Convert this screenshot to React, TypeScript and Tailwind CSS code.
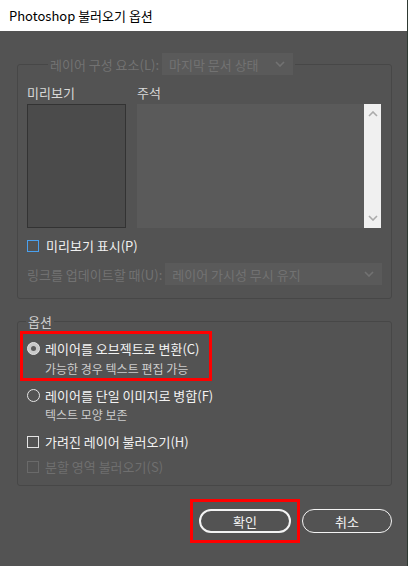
import React from "react";

const font = { fontFamily: '"Noto Sans CJK KR", "Noto Sans", sans-serif' };

function Chevron({ className, up }: { className?: string; up?: boolean }) {
  return (
    <svg width="10" height="6" viewBox="0 0 10 6" className={className}>
      <path
        d={up ? "M1 5 L5 1 L9 5" : "M1 1 L5 5 L9 1"}
        fill="none"
        stroke="currentColor"
        strokeWidth="1.6"
      />
    </svg>
  );
}

function Select({ label, className }: { label: string; className: string }) {
  return (
    <div className={`flex h-[22px] items-center justify-between bg-[#5a5a5a] pl-[7px] pr-[8px] text-[#727272] ${className}`}>
      <span>{label}</span>
      <Chevron className="text-[#727272]" />
    </div>
  );
}

function Radio({ checked }: { checked?: boolean }) {
  if (checked) {
    return (
      <span className="flex h-[13px] w-[13px] shrink-0 items-center justify-center rounded-full border border-[#e2e2e2] bg-[#c9c9c9]">
        <span className="h-[5px] w-[5px] rounded-full bg-[#5c5c5c]" />
      </span>
    );
  }
  return <span className="h-[13px] w-[13px] shrink-0 rounded-full border-[1.5px] border-[#e6e6e6]" />;
}

export default function App() {
  return (
    <div className="flex h-[566px] w-[408px] bg-[#535353] text-[13px] leading-[17px]" style={font}>
      <div className="flex w-[407px] flex-col">
        {/* title bar */}
        <div className="flex h-[31px] items-center bg-white pl-[9px] text-[13px] text-black">
          Photoshop 불러오기 옵션
        </div>

        {/* layer comps group */}
        <fieldset className="mx-[17px] mt-[22px] w-[375px] rounded-[3px] border border-[#474747] px-[9px] pb-[13px]">
          <legend className="ml-[21px] flex items-center gap-[3px] px-[2px] text-[#727272]">
            <span className="whitespace-nowrap">레이어 구성 요소(L):</span>
            <Select label="마지막 문서 상태" className="w-[131px] shrink-0" />
          </legend>

          <div className="mt-[9px] flex gap-[11px] text-[#d8d8d8]">
            <div className="flex w-[99px] flex-col">
              <span>미리보기</span>
              <div className="mt-[3px] h-[124px] border border-[#333333] bg-[#4b4b4b]" />
            </div>
            <div className="flex w-[244px] flex-col">
              <span>주석</span>
              <div className="mt-[3px] flex h-[124px] bg-[#5a5a5a]">
                <div className="flex-1" />
                <div className="flex w-[17px] flex-col items-center justify-between bg-[#f0f0f0] py-[7px] text-[#ababab]">
                  <Chevron up />
                  <Chevron />
                </div>
              </div>
            </div>
          </div>

          <label className="mt-[9px] flex items-center gap-[7px] text-[#f0f0f0]">
            <span className="h-[12px] w-[12px] border border-[#4aa0ee]" />
            <span>미리보기 표시(P)</span>
          </label>

          <div className="mt-[9px] flex items-center gap-[3px] text-[#727272]">
            <span className="whitespace-nowrap">링크를 업데이트할 때(U):</span>
            <Select label="레이어 가시성 무시 유지" className="w-[217px] shrink-0" />
          </div>
        </fieldset>

        {/* options group */}
        <fieldset className="mx-[17px] mt-[14px] h-[173px] w-[375px] rounded-[3px] border border-[#474747] pl-[2px]">
          <legend className="ml-[6px] px-[2px] text-[#cfcfcf]">옵션</legend>

          <div className="mt-[1px] h-[50px] w-[192px] border-[3px] border-[#ff0000] pl-[4px] pt-[6px]">
            <div className="flex items-center gap-[5px] whitespace-nowrap text-[#f2f2f2]">
              <Radio checked />
              <span>레이어를 오브젝트로 변환(C)</span>
            </div>
            <div className="mt-[3px] whitespace-nowrap pl-[18px] text-[12px] text-[#cccccc]">가능한 경우 텍스트 편집 가능</div>
          </div>

          <div className="ml-[7px] mt-[6px] flex items-center gap-[5px] text-[#f2f2f2]">
            <Radio />
            <span>레이어를 단일 이미지로 병합(F)</span>
          </div>
          <div className="ml-[25px] mt-[2px] text-[12px] text-[#cccccc]">텍스트 모양 보존</div>

          <label className="ml-[7px] mt-[10px] flex items-center gap-[6px] text-[#f2f2f2]">
            <span className="h-[12px] w-[12px] border border-[#e4e4e4]" />
            <span>가려진 레이어 불러오기(H)</span>
          </label>
          <label className="ml-[7px] mt-[8px] flex items-center gap-[6px] text-[#6f6f6f]">
            <span className="h-[12px] w-[12px] border border-[#6a6a6a]" />
            <span>분할 영역 불러오기(S)</span>
          </label>
        </fieldset>

        {/* buttons */}
        <div className="mr-[15px] mt-[13px] flex justify-end gap-[2px]">
          <div className="border-[3px] border-[#ff0000] px-[6px] py-[7px]">
            <button className="flex h-[24px] w-[92px] items-center justify-center rounded-full border-2 border-[#f4f4f4] text-[#f4f4f4]">
              확인
            </button>
          </div>
          <div className="flex items-center">
            <button className="flex h-[24px] w-[90px] items-center justify-center rounded-full border border-[#f4f4f4] text-[#f4f4f4]">
              취소
            </button>
          </div>
        </div>
      </div>
      <div className="w-[1px] bg-[#2f3a33]" />
    </div>
  );
}
